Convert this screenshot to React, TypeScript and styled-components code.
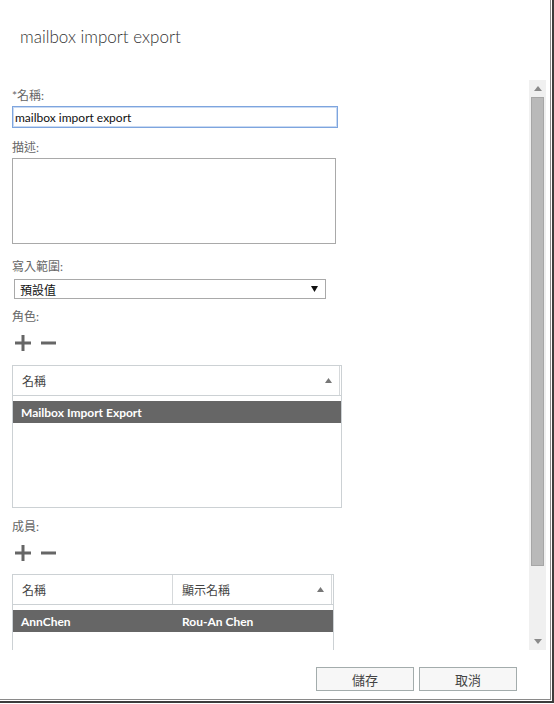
import React from 'react';
import styled, { createGlobalStyle } from 'styled-components';

const GlobalStyle = createGlobalStyle`
  html, body {
    margin: 0;
    padding: 0;
    background: #ffffff;
  }
  body {
    font-family: Lato, 'Noto Sans CJK TC', sans-serif;
    color: #333;
  }
`;

const Frame = styled.div`
  width: 552px;
  height: 701px;
  border-right: 2px solid #3c3c3c;
  border-bottom: 2px solid #3c3c3c;
  box-shadow: 1px 1px 0 #8a8a8a, 2px 2px 0 #cfcfcf;
`;

const Dialog = styled.div`
  width: 550px;
  height: 699px;
  background: #fff;
  display: flex;
  flex-direction: column;
  border-right: 1px solid #8a8a8a;
  border-bottom: 1px solid #8a8a8a;
`;

const Header = styled.div`
  height: 80px;
  box-sizing: border-box;
  padding: 24px 0 0 20px;
`;

const Title = styled.h1`
  margin: 0;
  font-size: 17px;
  font-weight: 300;
  line-height: 26px;
  color: #333;
`;

const Body = styled.div`
  height: 570px;
  display: flex;
  padding-right: 4px;
`;

const Scroller = styled.div`
  flex: 1;
  overflow: hidden;
  padding: 0 12px;
`;

const Label = styled.div<{ $top: number }>`
  margin-top: ${p => p.$top}px;
  font-size: 12px;
  line-height: 16px;
  color: #666;
`;

const TextInput = styled.input`
  display: block;
  box-sizing: border-box;
  margin-top: 2px;
  width: 326px;
  height: 22px;
  padding: 0 2px;
  border: 1px solid #7ea5de;
  box-shadow: inset 0 0 0 1px #c9daf3;
  outline: none;
  font-family: inherit;
  font-size: 12px;
  color: #111;
`;

const TextArea = styled.textarea`
  display: block;
  box-sizing: border-box;
  margin-top: 2px;
  width: 324px;
  height: 86px;
  border: 1px solid #a9a9a9;
  resize: none;
  outline: none;
`;

const Select = styled.div`
  box-sizing: border-box;
  margin: 4px 0 0 2px;
  width: 312px;
  height: 20px;
  border: 1px solid #a9a9a9;
  display: flex;
  align-items: center;
  justify-content: space-between;
  padding: 0 7px 0 5px;
  font-size: 12px;
  color: #111;
`;

const Tools = styled.div<{ $top: number }>`
  margin-top: ${p => p.$top}px;
  height: 16px;
  display: flex;
  align-items: center;
  gap: 10px;
  padding-left: 3px;
`;

const Table = styled.div<{ $top: number; $width: number; $height: number }>`
  margin-top: ${p => p.$top}px;
  box-sizing: border-box;
  width: ${p => p.$width}px;
  height: ${p => p.$height}px;
  border: 1px solid #ccd1d4;
  border-bottom-width: ${p => (p.$height > 100 ? 1 : 0)}px;
`;

const Row = styled.div<{ $cols: string }>`
  display: grid;
  grid-template-columns: ${p => p.$cols};
`;

const HeadRow = styled(Row)`
  height: 29px;
  border-bottom: 1px solid #ccd1d4;
  margin-bottom: 5px;
  padding-right: 1px;
`;

const HeadCell = styled.div`
  display: flex;
  align-items: center;
  justify-content: space-between;
  padding: 0 7px 0 9px;
  border-right: 1px solid #d6d9db;
  font-size: 12px;
  color: #444;
`;

const SelectedRow = styled(Row)`
  height: 22px;
  background: #666;
  align-items: center;
`;

const Cell = styled.div`
  padding-left: 8px;
  font-size: 12px;
  font-weight: 700;
  color: #fff;
  white-space: nowrap;
`;

const ScrollBar = styled.div`
  width: 17px;
  background: #f0f0f0;
  display: flex;
  flex-direction: column;
  align-items: center;
`;

const ScrollButton = styled.div`
  height: 17px;
  display: flex;
  align-items: center;
  justify-content: center;
`;

const Thumb = styled.div`
  box-sizing: border-box;
  width: 13px;
  height: 469px;
  background: #b9b9b9;
  border: 1px solid #a6a6a6;
`;

const Spacer = styled.div`
  flex: 1;
`;

const Footer = styled.div`
  flex: 1;
  display: flex;
  justify-content: flex-end;
  gap: 5px;
  padding: 17px 33px 0 0;
`;

const Button = styled.button`
  box-sizing: border-box;
  width: 98px;
  height: 24px;
  background: #f7f7f7;
  border: 1px solid #a3acac;
  font-family: inherit;
  font-size: 13px;
  color: #444;
  padding: 0;
`;

const Plus = () => (
  <svg width="16" height="16" viewBox="0 0 16 16">
    <rect x="0" y="6.5" width="16" height="3" fill="#666" />
    <rect x="6.5" y="0" width="3" height="16" fill="#666" />
  </svg>
);

const Minus = () => (
  <svg width="15" height="16" viewBox="0 0 15 16">
    <rect x="0" y="6.5" width="15" height="3" fill="#666" />
  </svg>
);

const Tri = ({ up, color = '#8a8a8a', w = 8, h = 5 }: { up: boolean; color?: string; w?: number; h?: number }) => (
  <svg width={w} height={h} viewBox={`0 0 ${w} ${h}`}>
    <polygon points={up ? `0,${h} ${w / 2},0 ${w},${h}` : `0,0 ${w},0 ${w / 2},${h}`} fill={color} />
  </svg>
);

const App = () => (
  <>
    <GlobalStyle />
    <Frame>
      <Dialog>
        <Header>
          <Title>mailbox import export</Title>
        </Header>
        <Body>
          <Scroller>
            <Label $top={8}>*名稱:</Label>
            <TextInput defaultValue="mailbox import export" />
            <Label $top={12}>描述:</Label>
            <TextArea />
            <Label $top={15}>寫入範圍:</Label>
            <Select>
              <span>預設值</span>
              <Tri up={false} color="#111" w={7} h={6} />
            </Select>
            <Label $top={10}>角色:</Label>
            <Tools $top={10}>
              <Plus />
              <Minus />
            </Tools>
            <Table $top={14} $width={330} $height={143}>
              <HeadRow $cols="1fr">
                <HeadCell>
                  名稱<Tri up color="#777" w={7} h={5} />
                </HeadCell>
              </HeadRow>
              <SelectedRow $cols="1fr">
                <Cell>Mailbox Import Export</Cell>
              </SelectedRow>
            </Table>
            <Label $top={11}>成員:</Label>
            <Tools $top={10}>
              <Plus />
              <Minus />
            </Tools>
            <Table $top={13} $width={322} $height={90}>
              <HeadRow $cols="160px 1fr">
                <HeadCell>名稱</HeadCell>
                <HeadCell>
                  顯示名稱<Tri up color="#777" w={7} h={5} />
                </HeadCell>
              </HeadRow>
              <SelectedRow $cols="161px 1fr">
                <Cell>AnnChen</Cell>
                <Cell>Rou-An Chen</Cell>
              </SelectedRow>
            </Table>
          </Scroller>
          <ScrollBar>
            <ScrollButton>
              <Tri up />
            </ScrollButton>
            <Thumb />
            <Spacer />
            <ScrollButton>
              <Tri up={false} />
            </ScrollButton>
          </ScrollBar>
        </Body>
        <Footer>
          <Button>儲存</Button>
          <Button>取消</Button>
        </Footer>
      </Dialog>
    </Frame>
  </>
);

export default App;
